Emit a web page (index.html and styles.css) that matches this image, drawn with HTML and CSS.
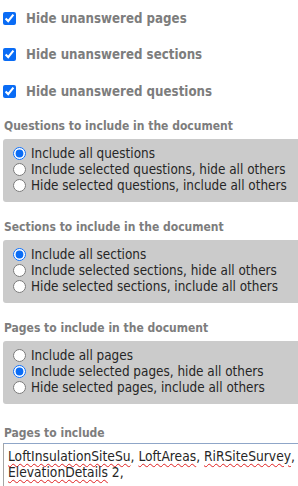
FILE: index.html
```html
<!DOCTYPE html>
<html lang="en">
  <head>
    <meta charset="utf-8" />
    <meta name="viewport" content="width=device-width, initial-scale=1" />
    <title>Document options</title>
    <link rel="stylesheet" href="styles.css">
  </head>
  <body>
    <div class="options">
      <label class="check"><input type="checkbox" checked />Hide unanswered pages</label>
      <label class="check"><input type="checkbox" checked />Hide unanswered sections</label>
      <label class="check"><input type="checkbox" checked />Hide unanswered questions</label>
    </div>

    <!-- radio groups -->
    <div class="group">
      <h2>Questions to include in the document</h2>
      <div class="well">
        <label><input type="radio" name="questions" checked />Include all questions</label>
        <label><input type="radio" name="questions" />Include selected questions, hide all others</label>
        <label><input type="radio" name="questions" />Hide selected questions, include all others</label>
      </div>
    </div>

    <div class="group">
      <h2>Sections to include in the document</h2>
      <div class="well">
        <label><input type="radio" name="sections" checked />Include all sections</label>
        <label><input type="radio" name="sections" />Include selected sections, hide all others</label>
        <label><input type="radio" name="sections" />Hide selected sections, include all others</label>
      </div>
    </div>

    <div class="group">
      <h2>Pages to include in the document</h2>
      <div class="well">
        <label><input type="radio" name="pages" />Include all pages</label>
        <label><input type="radio" name="pages" checked />Include selected pages, hide all others</label>
        <label><input type="radio" name="pages" />Hide selected pages, include all others</label>
      </div>
    </div>

    <div class="group last">
      <h2>Pages to include</h2>
      <div class="pagelist"><span class="typo">LoftInsulationSiteSu</span>, <span class="typo">LoftAreas</span>, <span class="typo">RiRSiteSurvey</span>, <span class="typo">ElevationDetails</span> 2,</div>
    </div>
  </body>
</html>
```

FILE: styles.css
```css
body {
  margin: 0;
  font-family: "DejaVu Sans Condensed", "DejaVu Sans", sans-serif;
  font-size: 13.4px;
  color: #262626;
  background: #fff;
  overflow: hidden;
}

.options {
  padding-top: 8px;
}

.check {
  display: flex;
  align-items: center;
  height: 20px;
  margin-bottom: 16.5px;
  font-weight: bold;
  font-size: 13.2px;
  color: #7d7d7d;
}

.check input {
  width: 13px;
  height: 13px;
  margin: 0 10px 0 3px;
  accent-color: #0a6cf5;
}

.options + .group {
  margin-top: 4px;
}

.group h2 {
  margin: 0 0 5px 4px;
  font-size: 12px;
  line-height: 16px;
  font-weight: bold;
  color: #7d7d7d;
}

.well {
  margin: 0 0 17px 3px;
  padding: 7px 0 8px 10px;
  background: #cbcbcb;
  border-radius: 3px 0 0 3px;
}

.well label {
  display: flex;
  align-items: center;
  height: 16px;
  line-height: 16px;
}

.well input {
  width: 13px;
  height: 13px;
  margin: 0 5px 0 0;
  accent-color: #0a6cf5;
}

.group.last {
  margin-top: 21px;
}

.group.last h2 {
  margin-bottom: 2px;
}

.pagelist {
  margin-left: 3px;
  width: 300px;
  height: 60px;
  padding: 4px 4px;
  border: 1px solid #a5a5a5;
  border-top-color: #8fa6c8;
  font-size: 13.7px;
  line-height: 16px;
}

.typo {
  text-decoration: underline wavy #e02020;
  text-decoration-thickness: 1px;
  text-underline-offset: 2px;
}
```
